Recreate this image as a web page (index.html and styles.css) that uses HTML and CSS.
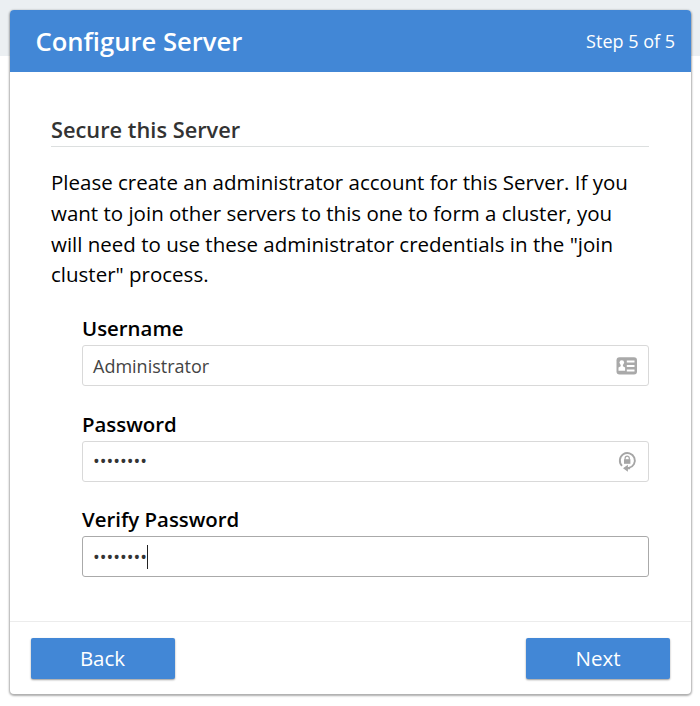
FILE: index.html
```html
<!DOCTYPE html>
<html lang="en">
<head>
<meta charset="utf-8">
<title>Configure Server</title>
<link rel="stylesheet" href="styles.css">
</head>
<body>
<main class="card">
  <header class="card-header">
    <h1 class="title">Configure Server</h1>
    <span class="step">Step 5 of 5</span>
  </header>
  <section class="content">
    <h2 class="subtitle">Secure this Server</h2>
    <p class="intro">Please create an administrator account for this Server. If you<br>want to join other servers to this one to form a cluster, you<br>will need to use these administrator credentials in the "join<br>cluster" process.</p>
    <div class="fields">
      <div class="field">
        <div class="label">Username</div>
        <div class="input"><span class="value">Administrator</span>
          <svg class="icon" width="22" height="20" viewBox="0 0 22 20"><rect x=".5" y="1.2" width="20.5" height="17.3" rx="3" fill="#a9a9a9"/><g fill="#fff"><circle cx="5.8" cy="6.6" r="2.3"/><path d="M4.7 8h2.2v2.2l2.2 1.3v3.2H2.5v-3.2l2.2-1.3z"/><path d="M10.8 4.5h7.7v2h-7.7zM10.8 9h7.7v2h-7.7zM10.8 13.4h7.7v2h-7.7z"/></g></svg>
        </div>
      </div>
      <div class="field">
        <div class="label">Password</div>
        <div class="input"><span class="dots">••••••••</span>
          <svg class="icon" width="22" height="22" viewBox="0 0 22 22"><path d="M6 15.8A7.5 7.5 0 1 1 12.8 17.9" fill="none" stroke="#a6a6a6" stroke-width="1.9"/><path d="M7 18.2l4.9-3.5v2.3h2.2v2.3h-2.2v2.4z" fill="#a6a6a6"/><path d="M9.1 9.8V8.2a2.1 2.1 0 0 1 4.2 0v1.6" fill="none" stroke="#a6a6a6" stroke-width="1.2"/><rect x="8" y="9.2" width="6.4" height="4.6" fill="#a6a6a6"/></svg>
        </div>
      </div>
      <div class="field">
        <div class="label">Verify Password</div>
        <div class="input focused"><span class="dots">••••••••</span><i class="caret"></i></div>
      </div>
    </div>
  </section>
  <footer class="actions">
    <button class="button" type="button">Back</button>
    <button class="button" type="button">Next</button>
  </footer>
</main>
</body>
</html>
```
FILE: styles.css
```css
* { box-sizing: border-box; }
body {
  margin: 0;
  height: 706px;
  padding: 10px 9px 0 10px;
  background: linear-gradient(#ebeff2 56.5px, #fff 56.5px);
  font-family: "Open Sans", sans-serif;
  color: #000;
  overflow: hidden;
}
h1, h2, p { margin: 0; }
.card {
  display: flex;
  flex-direction: column;
  height: 684px;
  background: #fff;
  border-radius: 4px;
  box-shadow: 0 1px 2px 1px rgba(0, 0, 0, .32);
}
.card-header {
  display: flex;
  align-items: center;
  justify-content: space-between;
  height: 62px;
  padding: 0 16px 0 25.5px;
  background: #4287d6;
  border-radius: 4px 4px 0 0;
  color: #fff;
}
.title { padding-top: 1px; font-size: 25.6px; font-weight: 600; line-height: 62px; }
.step { font-size: 18px; line-height: 62px; }
.content { flex: 1; padding: 43px 42px 0 41px; }
.subtitle {
  height: 32px;
  border-bottom: 1px solid #dcdfdf;
  color: #333;
  font-size: 21.8px;
  font-weight: 600;
  line-height: 30px;
}
.intro { margin-top: 20.2px; font-size: 20.5px; line-height: 30.7px; white-space: nowrap; }
.fields { padding: 23px 0 0 31px; }
.field { margin-bottom: 22.7px; }
.label { height: 32px; font-size: 20.4px; font-weight: 600; line-height: 30px; }
.input {
  display: flex;
  align-items: center;
  height: 41px;
  padding: 0 10px;
  border: 1px solid #d9d9d9;
  border-radius: 3px;
  background: #fff;
  color: #444;
}
.focused { border-color: #aaa; }
.value { font-size: 18px; }
.dots { font-size: 18px; color: #333; }
.icon { margin-left: auto; }
.caret { width: 1px; height: 24px; background: #222; }
.actions {
  display: flex;
  justify-content: space-between;
  height: 73px;
  padding: 15.5px 21px 0 20.5px;
  border-top: 1px solid #ececec;
}
.button {
  width: 144px;
  height: 41px;
  padding: 0 0 1px;
  border: 0;
  border-radius: 2px;
  background: #4287d6;
  box-shadow: 0 1px 2px rgba(0, 0, 0, .4);
  color: #fff;
  font: 20.5px "Open Sans", sans-serif;
}
```
